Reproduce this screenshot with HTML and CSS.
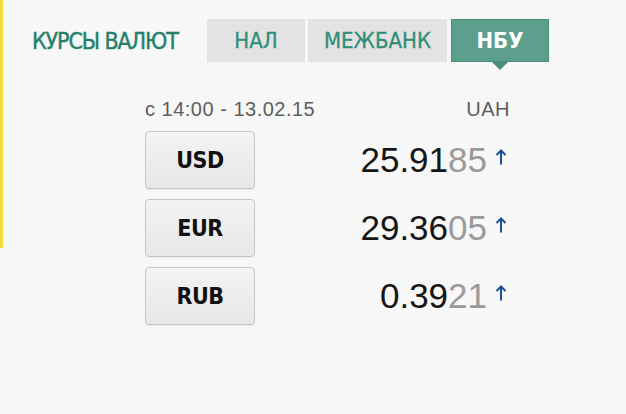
FILE: index.html
```html
<!DOCTYPE html>
<html lang="ru">
<head>
    <meta charset="UTF-8">
    <meta name="viewport" content="width=device-width, initial-scale=1.0">
    <title>Курсы валют</title>
    <link rel="stylesheet" href="styles.css">
</head>
<body>
    <div class="page">
        <div class="side-strip"></div>

        <div class="widget">
            <div class="widget-head">
                <h2 class="widget-title">КУРСЫ ВАЛЮТ</h2>
                <ul class="tabs">
                    <li class="tab">НАЛ</li>
                    <li class="tab tab-wide">МЕЖБАНК</li>
                    <li class="tab active">НБУ</li>
                </ul>
            </div>

            <div class="rates">
                <div class="rates-info">
                    <span>с 14:00 - 13.02.15</span>
                    <span>UAH</span>
                </div>

                <div class="rate-row">
                    <button class="currency">USD</button>
                    <div class="rate">
                        <span class="value">25.91<span class="tail">85</span></span>
                        <svg class="trend" width="12" height="16" viewBox="0 0 12 16">
                            <path d="M6 15.5V1.5M1.5 6L6 1.5L10.5 6" fill="none" stroke="#1f4f98" stroke-width="2"/>
                        </svg>
                    </div>
                </div>

                <div class="rate-row">
                    <button class="currency">EUR</button>
                    <div class="rate">
                        <span class="value">29.36<span class="tail">05</span></span>
                        <svg class="trend" width="12" height="16" viewBox="0 0 12 16">
                            <path d="M6 15.5V1.5M1.5 6L6 1.5L10.5 6" fill="none" stroke="#1f4f98" stroke-width="2"/>
                        </svg>
                    </div>
                </div>

                <div class="rate-row">
                    <button class="currency">RUB</button>
                    <div class="rate">
                        <span class="value">0.39<span class="tail">21</span></span>
                        <svg class="trend" width="12" height="16" viewBox="0 0 12 16">
                            <path d="M6 15.5V1.5M1.5 6L6 1.5L10.5 6" fill="none" stroke="#1f4f98" stroke-width="2"/>
                        </svg>
                    </div>
                </div>
            </div>
        </div>
    </div>
</body>
</html>
```

FILE: styles.css
```css
body {
    margin: 0;
    background-color: #f7f7f7;
    font-family: "Liberation Sans", Arial, sans-serif;
}

.page {
    display: flex;
    align-items: flex-start;
    min-height: 414px;
}

.side-strip {
    width: 3px;
    height: 248px;
    background-color: #f2dc3a;
    flex-shrink: 0;
}

.widget {
    flex: 1;
    padding-top: 19px;
}

/* header: title + tabs */
.widget-head {
    display: flex;
    align-items: center;
    padding-left: 29px;
}

.widget-title {
    width: 175px;
    margin: 0;
    font-family: "DejaVu Sans Condensed", "DejaVu Sans", sans-serif;
    font-size: 23px;
    font-weight: normal;
    letter-spacing: -1.1px;
    white-space: nowrap;
    color: #25806b;
    -webkit-text-stroke: 0.4px #25806b;
}

.tabs {
    display: flex;
    gap: 3px;
    margin: 0;
    padding: 0;
    list-style: none;
}

.tab {
    position: relative;
    width: 98px;
    height: 43px;
    line-height: 43px;
    text-align: center;
    background-color: #e3e3e3;
    font-family: "DejaVu Sans Condensed", "DejaVu Sans", sans-serif;
    font-size: 22px;
    color: #2f8f78;
    -webkit-text-stroke: 0.3px #2f8f78;
}

.tab-wide {
    width: 139px;
}

.tab.active {
    width: 96px;
    height: 41px;
    line-height: 41px;
    margin-left: 1px;
    background-color: #5b9f8c;
    border: 1px solid #4d8d7b;
    color: #fff;
    font-weight: bold;
    -webkit-text-stroke: 0;
}

.tab.active::after {
    content: "";
    position: absolute;
    left: 50%;
    bottom: -9px;
    margin-left: -9px;
    border-left: 9px solid transparent;
    border-right: 9px solid transparent;
    border-top: 9px solid #4d8d7b;
}

/* rates table */
.rates {
    width: 365px;
    margin: 37px 0 0 142px;
}

.rates-info {
    display: flex;
    justify-content: space-between;
    font-size: 20px;
    line-height: 20px;
    letter-spacing: 0.5px;
    color: #5e5e5e;
    margin-bottom: 12px;
}

.rate-row {
    display: flex;
    align-items: center;
    justify-content: space-between;
    margin-bottom: 10px;
}

.currency {
    width: 110px;
    height: 58px;
    padding: 0;
    border: 1px solid #c6c6c6;
    border-radius: 4px;
    background: linear-gradient(#f3f3f3, #e7e7e7);
    box-shadow: 0 1px 1px rgba(0, 0, 0, 0.06);
    font-family: "DejaVu Sans Condensed", "DejaVu Sans", sans-serif;
    font-size: 23px;
    font-weight: bold;
    letter-spacing: -0.5px;
    color: #111;
    cursor: pointer;
}

.rate {
    display: flex;
    align-items: center;
    gap: 8px;
    margin-right: 3px;
}

.value {
    font-size: 35px;
    color: #161616;
}

.tail {
    color: #9a9a9a;
}

.trend {
    margin-bottom: 7px;
}
```
